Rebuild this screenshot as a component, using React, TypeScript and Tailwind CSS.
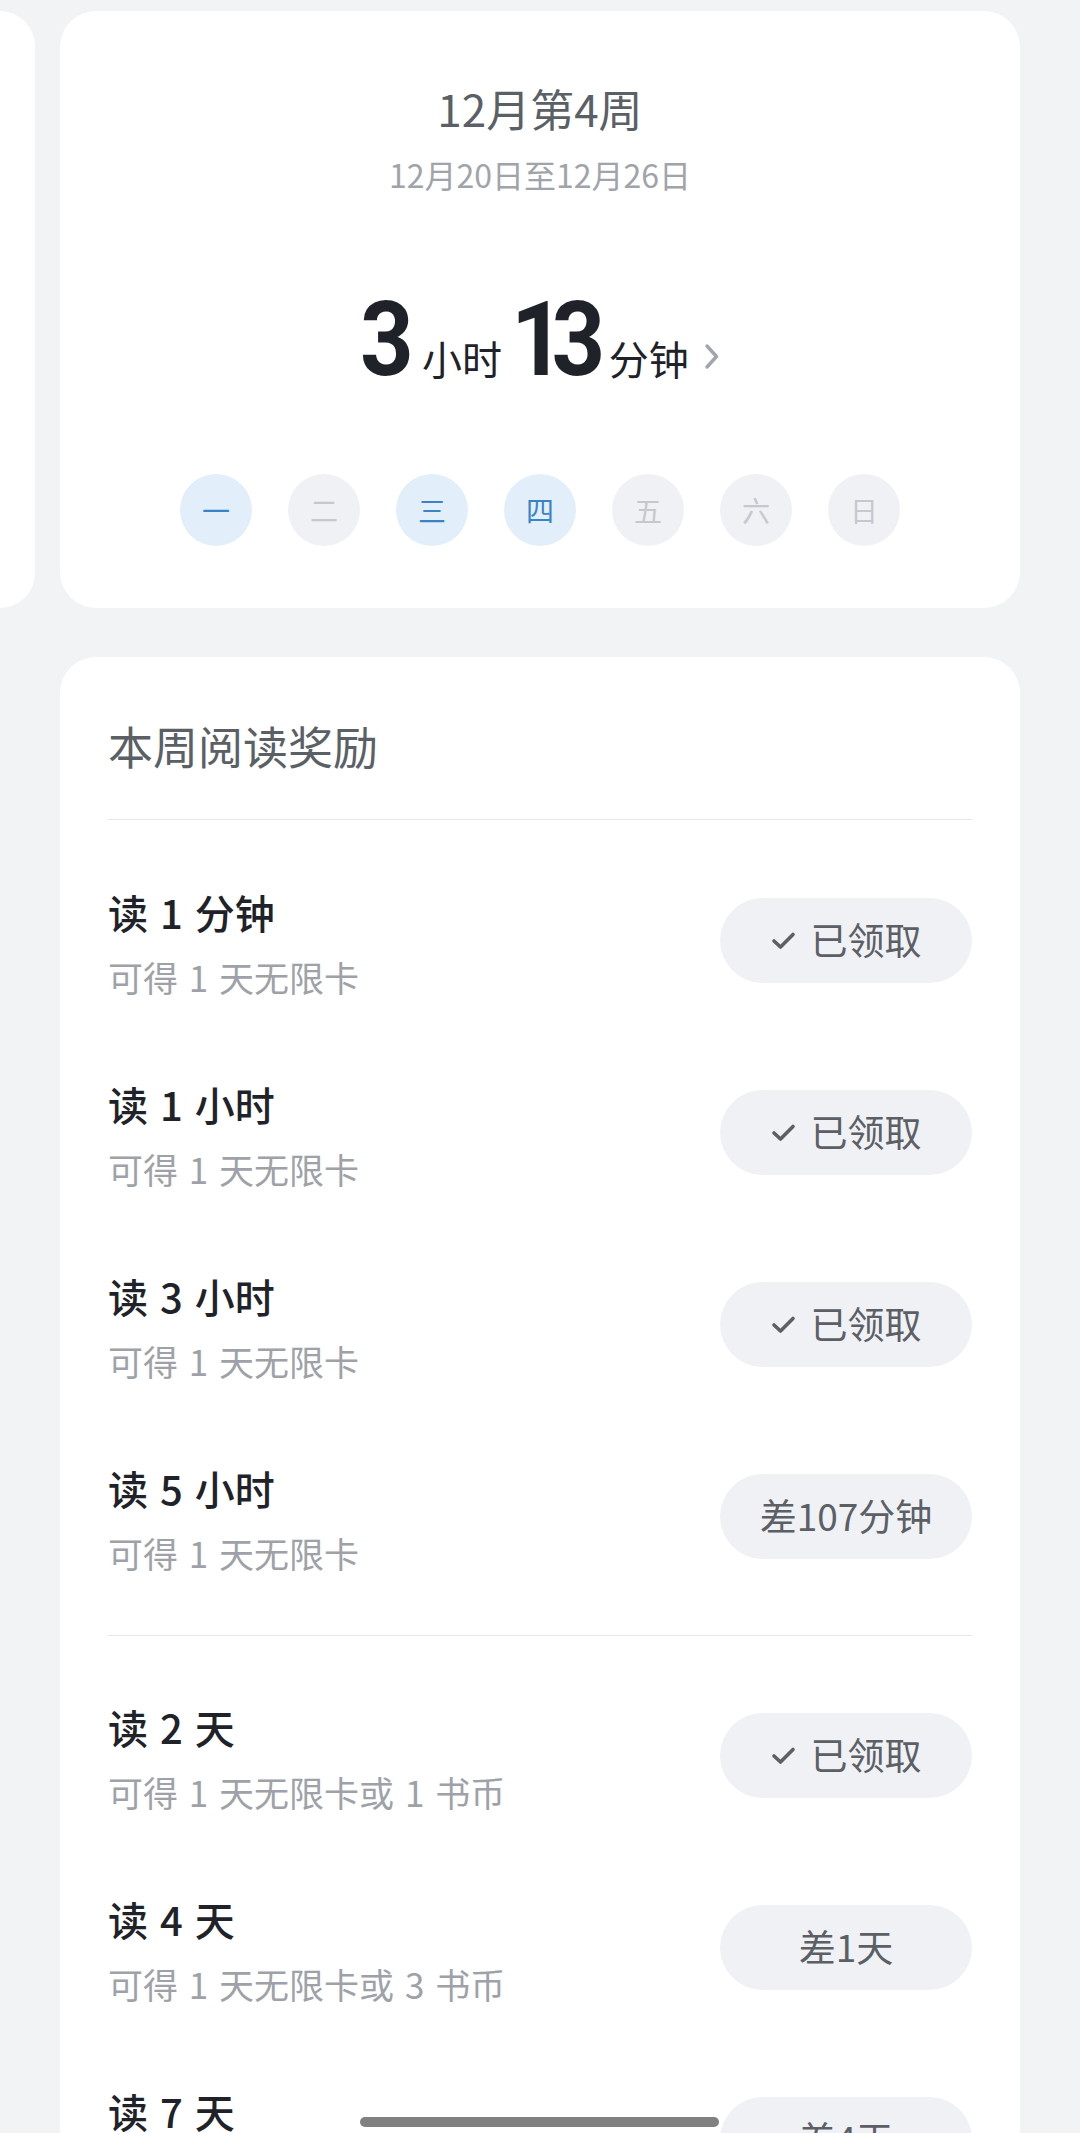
import React from "react";

const cjk = "font-['Noto_Sans_CJK_SC','Noto_Sans',sans-serif]";

const days = [
  { t: "一", on: true },
  { t: "二", on: false },
  { t: "三", on: true },
  { t: "四", on: true },
  { t: "五", on: false },
  { t: "六", on: false },
  { t: "日", on: false },
];

const timeRewards = [
  { title: "读 1 分钟", sub: "可得 1 天无限卡", done: true, label: "已领取" },
  { title: "读 1 小时", sub: "可得 1 天无限卡", done: true, label: "已领取" },
  { title: "读 3 小时", sub: "可得 1 天无限卡", done: true, label: "已领取" },
  { title: "读 5 小时", sub: "可得 1 天无限卡", done: false, label: "差107分钟" },
];

const dayRewards = [
  { title: "读 2 天", sub: "可得 1 天无限卡或 1 书币", done: true, label: "已领取" },
  { title: "读 4 天", sub: "可得 1 天无限卡或 3 书币", done: false, label: "差1天" },
  { title: "读 7 天", sub: "可得 1 天无限卡或 5 书币", done: false, label: "差4天" },
];

function Check() {
  return (
    <svg width="25" height="19" viewBox="0 0 25 19" fill="none">
      <path
        d="M3 10 L9.5 16 L22 3.5"
        stroke="#5b5f66"
        strokeWidth="3.6"
        strokeLinecap="round"
        strokeLinejoin="round"
      />
    </svg>
  );
}

function RewardRow({ title, sub, done, label }) {
  return (
    <div className="flex items-center justify-between h-[192px]">
      <div className="flex flex-col pt-[6px] [word-spacing:3px]">
        <div className="text-[40px] leading-[50px] font-medium text-[#1f2329]">
          {title}
        </div>
        <div className="mt-[18px] text-[35px] leading-[44px] text-[#9ea2a8]">
          {sub}
        </div>
      </div>
      <div className="flex items-center justify-center gap-[15px] w-[252px] h-[85px] rounded-full bg-[#f0f1f4] text-[37px] text-[#5b5f66]">
        {done && <Check />}
        <span>{label}</span>
      </div>
    </div>
  );
}

export default function App() {
  return (
    <div className={`relative h-[2133px] overflow-hidden bg-[#f2f3f5] ${cjk}`}>
      {/* week summary */}
      <div className="flex gap-[25px] pt-[11px]">
        <div className="w-[35px] h-[597px] bg-white rounded-r-[36px]" />
        <div className="w-[960px] h-[597px] bg-white rounded-[36px] flex flex-col items-center pt-[68px]">
          <div className="text-[44px] leading-[58px] text-[#5b5f66]">12月第4周</div>
          <div className="mt-[17px] text-[32px] leading-[40px] text-[#a0a4aa]">
            12月20日至12月26日
          </div>
          <div className="mt-[94px] flex items-baseline h-[104px] text-[#1f2329]">
            <span className="inline-block origin-left scale-x-[0.9] -mr-[6px] font-['Roboto',sans-serif] font-bold text-[104px] leading-none">
              3
            </span>
            <span className="ml-[8px] text-[40px] leading-none">小时</span>
            <span className="ml-[9px] inline-block origin-left scale-x-[0.9] -mr-[10px] font-['Roboto',sans-serif] font-bold text-[104px] leading-none">
              <span className="tracking-[-0.14em]">1</span>3
            </span>
            <span className="ml-[3px] text-[40px] leading-none">分钟</span>
            <span className="ml-[15px] pb-[5px]">
              <svg width="16" height="27" viewBox="0 0 16 27" fill="none" className="block">
                <path
                  d="M3 3 L12.5 13.5 L3 24"
                  stroke="#a2a6ac"
                  strokeWidth="3.4"
                  strokeLinecap="round"
                  strokeLinejoin="round"
                />
              </svg>
            </span>
          </div>
          <div className="mt-[82px] flex gap-[36px]">
            {days.map((d) => (
              <div
                key={d.t}
                className={
                  d.on
                    ? "w-[72px] h-[72px] rounded-full bg-[#e2effb] flex items-center justify-center text-[28px] text-[#3a84c6]"
                    : "w-[72px] h-[72px] rounded-full bg-[#f0f1f4] flex items-center justify-center text-[28px] text-[#c6c8cd]"
                }
              >
                {d.t}
              </div>
            ))}
          </div>
        </div>
      </div>

      {/* weekly rewards */}
      <div className="mt-[49px] ml-[60px] w-[960px] bg-white rounded-t-[36px] px-[48px]">
        <div className="pt-[61px] pb-[45px] text-[45px] leading-[56px] text-[#5b5f66]">
          本周阅读奖励
        </div>
        <div className="h-px bg-[#e6e7ea]" />
        <div className="pt-[24px]">
          {timeRewards.map((r) => (
            <RewardRow key={r.title} {...r} />
          ))}
        </div>
        <div className="mt-[23px] h-px bg-[#e6e7ea]" />
        <div className="pt-[23px]">
          {dayRewards.map((r) => (
            <RewardRow key={r.title} {...r} />
          ))}
        </div>
      </div>

      {/* home indicator */}
      <div className="absolute bottom-[6px] left-[360px] w-[359px] h-[10px] rounded-full bg-[#808080]" />
    </div>
  );
}
